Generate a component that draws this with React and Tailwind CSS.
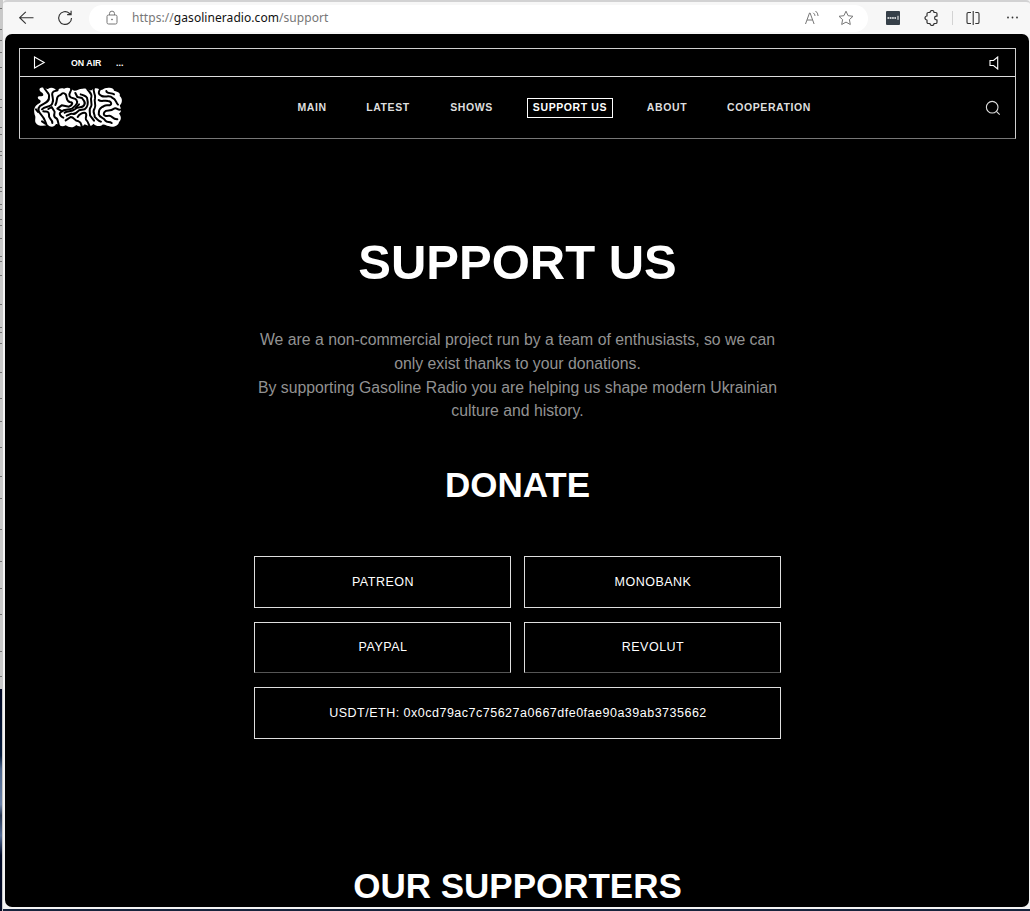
import React from "react";

const navItems = [
  { label: "MAIN", box: "ml-[277px] w-[30px]" },
  { label: "LATEST", box: "ml-[39px] w-[44px]" },
  { label: "SHOWS", box: "ml-[40px] w-[43px]" },
  { label: "SUPPORT US", box: "ml-[34px] h-[20px] w-[86px] border border-white text-white" },
  { label: "ABOUT", box: "ml-[33px] w-[42px]" },
  { label: "COOPERATION", box: "ml-[39px] w-[84px]" },
];

const ticks = [8, 29, 40, 52, 67, 99, 107, 127, 134, 151, 155, 168, 187, 191, 204, 209, 219, 225, 238, 256, 261, 275, 304, 327, 332, 343, 372, 398, 421, 447, 476, 498, 529, 561, 588, 614, 651, 676];

function BrowserBar() {
  return (
    <header className="flex h-[34px] shrink-0 items-center rounded-t border-t-2 border-[#d2d2d3] bg-[#f7f7f7] text-[#333]">
      <svg className="ml-[14px] h-5 w-5 shrink-0" viewBox="0 0 20 20" fill="none" stroke="currentColor" strokeWidth="1.15">
        <path d="M16.5 9.7H3M8.8 3.8 2.7 9.7l6.1 5.9" />
      </svg>
      <svg className="ml-[18px] h-5 w-5 shrink-0" viewBox="0 0 20 20" fill="none" stroke="currentColor" strokeWidth="1.15">
        <path d="M16.5 10a6.4 6.4 0 1 1-2.2-4.8L16 6.5M16.1 2.8v3.8h-4" />
      </svg>
      <div className="ml-[14px] flex h-[27px] w-[779px] shrink-0 items-center rounded-full bg-white">
        <svg className="ml-[16px] h-4 w-[14px] text-[#777]" viewBox="0 0 14 16" fill="none" stroke="currentColor" strokeWidth="1">
          <rect x="2" y="5" width="10" height="9" rx="1.5" />
          <path d="M4.5 5V3.6a2.5 2.5 0 0 1 5 0V5" />
          <circle cx="7" cy="9.5" r=".5" fill="currentColor" />
        </svg>
        <span className="ml-[13px] w-[198px] whitespace-nowrap font-['Noto_Sans',sans-serif] text-[12px] tracking-[0.06px] text-[#777]">
          https://<span className="text-[#111]">gasolineradio.com</span>/support
        </span>
        <svg className="ml-[474px] h-4 w-4 text-[#777]" viewBox="0 0 16 16" fill="none" stroke="currentColor" strokeWidth="1">
          <path d="m1.5 14 4-11h.6l4 11M3 10h5.6M9.2 2.8q1.7 1.1 1.8 3.1M11.5 1q2.5 1.8 2.6 5" />
        </svg>
        <svg className="ml-[18px] h-4 w-4 text-[#777]" viewBox="0 0 16 16" fill="none" stroke="currentColor" strokeWidth="1">
          <path strokeLinejoin="round" d="m8 1.2 2.1 4.5 4.9.6-3.6 3.3.9 4.9L8 12.1l-4.3 2.4.9-4.9L1 6.3l4.9-.6z" />
        </svg>
      </div>
      <svg className="ml-[18px] h-[14px] w-[14px] shrink-0" viewBox="0 0 14 14">
        <rect width="14" height="14" rx="1" fill="#364049" />
        <path d="M1.5 7h8.5" stroke="white" strokeWidth="1.6" strokeDasharray="1.7 .6" />
        <path d="M12 4.8v4" stroke="white" />
      </svg>
      <svg className="ml-[24px] h-4 w-4 shrink-0" viewBox="0 0 16 16" fill="none" stroke="currentColor" strokeWidth="1.2" strokeLinejoin="round">
        <path d="M4 2.5h2a2 2 0 0 1 4 0h1.7q1.3 0 1.3 1.3v2.4h-.6a1.8 1.8 0 0 0 0 3.6h.6v2.4q0 1.3-1.3 1.3H10a2 2 0 0 1-4 0H4.3Q3 13.5 3 12.2V10a2 2 0 0 1 0-4V3.8q0-1.3 1.3-1.3z" />
      </svg>
      <div className="ml-[12px] h-[14px] w-px bg-[#d3d3d3]" />
      <svg className="ml-[12px] h-4 w-4 shrink-0" viewBox="0 0 16 16" fill="none" stroke="currentColor" strokeWidth="1.1">
        <path d="M6 2.5H3.3q-1.3 0-1.3 1.3v8.4q0 1.3 1.3 1.3H6M10.3 2.5h2.4q1.3 0 1.3 1.3v8.4q0 1.3-1.3 1.3h-2.4M8.2 1v14" />
      </svg>
      <svg className="ml-[24px] h-4 w-4 shrink-0" viewBox="0 0 16 16" fill="currentColor">
        <circle cx="3" cy="7.5" r=".9" /><circle cx="7.5" cy="7.5" r=".9" /><circle cx="12" cy="7.5" r=".9" />
      </svg>
    </header>
  );
}

function Logo() {
  return (
    <svg className="ml-[5px] h-[55px] w-[105px] shrink-0" viewBox="0 0 315 165">
      <path
        fill="white"
        d="M48 23C60 20 64 30 70 26C78 20 92 24 95 34C98 26 109 23 117 26C128 21 137 24 144 31C153 36 161 25 174 26C187 23 192 33 200 31C206 23 217 24 223 28C231 34 236 23 246 24C257 22 266 24 267 32C281 35 287 40 284 48C294 56 292 69 284 77C289 86 291 94 282 101C290 110 289 119 282 126C281 138 262 144 251 138C244 139 242 132 232 134C224 142 212 137 205 131C199 142 187 137 179 133C172 143 158 139 154 135C144 145 133 143 122 136C108 145 103 131 93 132C86 144 75 140 68 135C56 139 38 139 32 128C28 119 34 113 29 104C26 91 27 80 38 73C49 68 50 62 41 58C34 49 43 48 49 49C59 48 55 39 48 36C41 29 43 24 48 23Z"
      />
      <g fill="none" stroke="black" strokeWidth="6" strokeLinecap="round" strokeLinejoin="round">
        <path d="M56 17C58 36 75 35 72 51C74 67 57 69 45 78C35 88 43 99 50 106C59 115 58 119 68 142" />
        <path d="M51 88C60 77 78 84 82 70C89 58 79 48 82 39C86 28 100 36 98 27" />
        <path d="M55 94C65 96 70 91 72 103C69 118 82 115 82 129M70 87L80 81L87 92C94 99 81 105 91 113C103 116 95 127 105 143" />
        <path d="M91 75C99 61 92 51 102 47C113 43 110 34 122 43C127 52 122 61 134 66C146 67 143 75 132 80L110 76L97 86L108 92" />
        <path d="M138 22C142 38 129 35 134 49C139 58 151 52 155 61C162 71 148 80 141 86C128 91 119 84 108 96C98 102 111 111 115 113" />
        <path d="M119 98C129 92 140 96 149 88C160 77 174 87 178 74C184 65 173 59 171 54L157 51L151 39" />
        <path d="M125 107L139 101C148 104 153 100 162 91L179 88C186 82 191 72 187 59C188 49 179 47 167 43" />
        <path d="M122 121L137 111C149 111 146 123 161 124C172 128 166 135 173 145" />
        <path d="M158 111C163 102 174 97 181 99C189 105 179 112 183 119C191 127 190 132 195 142" />
        <path d="M185 23C188 35 202 37 199 51C195 61 203 71 198 80C190 88 196 97 195 106L207 122" />
        <path d="M207 23C201 37 214 43 210 55C206 66 215 75 209 85C200 96 211 102 209 111C218 117 218 123 228 125" />
        <path d="M230 21C217 38 220 44 230 48C241 54 253 43 263 54C273 57 272 67 279 74" />
        <path d="M221 60C227 66 239 60 249 63C260 64 263 76 250 76C238 74 238 79 231 81C218 89 223 99 221 103C224 114 237 111 241 122C247 129 253 123 260 129" />
        <path d="M289 88C276 93 276 79 265 87C257 96 244 87 238 97C232 107 244 110 253 107C262 107 263 119 277 118" />
        <path d="M244 33C244 42 260 37 267 43M51 124L61 131M33 88L39 96M153 83L162 73" />
      </g>
    </svg>
  );
}

function Donate({ children, className = "h-[52px]" }) {
  return (
    <button className={"flex items-center justify-center border border-[#dedede] pl-[2px] text-[12.5px] tracking-[0.5px] text-white " + className}>
      {children}
    </button>
  );
}

export default function App() {
  return (
    <div className="flex h-[911px] w-[1030px] overflow-hidden bg-[#e6e6e6] font-['Liberation_Sans',Arial,sans-serif]">
      <svg className="h-[911px] w-[3px] shrink-0" viewBox="0 0 3 911">
        <defs>
          <linearGradient id="edge" x1="0" y1="0" x2="0" y2="1">
            <stop offset="0" stopColor="#020824" /><stop offset=".3" stopColor="#071d3d" />
            <stop offset=".36" stopColor="#4c658b" /><stop offset=".52" stopColor="#6a80a6" />
            <stop offset=".57" stopColor="#273752" /><stop offset=".66" stopColor="#536b95" />
            <stop offset=".75" stopColor="#020b28" /><stop offset="1" stopColor="#050b24" />
          </linearGradient>
        </defs>
        <rect width="3" height="911" fill="#c9c9c9" />
        {ticks.map((y) => <rect key={y} y={y} width="2" height="1" fill="#777" />)}
        <rect y="689" width="2" height="222" fill="url(#edge)" />
      </svg>
      <div className="flex w-[1027px] shrink-0 flex-col bg-[#f4f4f4]">
        <BrowserBar />
        <div className="ml-[2px] mr-px flex h-[873px] flex-col rounded-[7px] bg-black px-[14px] pt-[14px]">
          <div className="flex h-[91px] w-[997px] shrink-0 flex-col border border-[#cfcfcf] border-b-[#777]">
            <div className="flex h-[28px] shrink-0 items-center border-b border-[#ddd] text-white">
              <svg className="ml-[13px] h-[13px] w-[13px]" viewBox="0 0 13 13" fill="none" stroke="currentColor" strokeWidth="1.1">
                <path d="M1.5 1v11l9.7-5.5z" />
              </svg>
              <span className="ml-[25px] w-[31px] whitespace-nowrap pt-[2px] text-[8.8px] font-bold">ON AIR</span>
              <span className="ml-[14px] pt-[2px] text-[9px] font-bold">...</span>
              <svg className="ml-auto mr-[15px] h-[14px] w-[11px]" viewBox="0 0 11 14" fill="none" stroke="currentColor" strokeWidth="1.1">
                <path d="M8.7 1v12L4.5 9.5H1v-5h3.5z" />
              </svg>
            </div>
            <nav className="flex h-[61px] items-center text-[10.5px] font-bold tracking-[0.6px] text-[#dedede]">
              <div className="flex w-0 shrink-0"><Logo /></div>
              {navItems.map((item) => (
                <a key={item.label} className={"flex shrink-0 items-center justify-center whitespace-nowrap " + item.box}>{item.label}</a>
              ))}
              <svg className="ml-auto mr-[14px] h-4 w-4" viewBox="0 0 16 16" fill="none" stroke="currentColor" strokeWidth="1.1">
                <circle cx="7.2" cy="7.2" r="5.8" /><path d="m11.4 11.4 3.3 3.3" />
              </svg>
            </nav>
          </div>
          <main className="flex flex-col items-center text-center text-white">
            <h1 className="mt-[93px] h-[60px] whitespace-nowrap pl-px text-[49px] font-bold leading-[60px]">SUPPORT US</h1>
            <p className="mt-[36px] w-[560px] whitespace-nowrap pl-px text-[15.8px] leading-[23.8px] text-[#929292]">
              We are a non-commercial project run by a team of enthusiasts, so we can<br />
              only exist thanks to your donations.<br />
              By supporting Gasoline Radio you are helping us shape modern Ukrainian<br />
              culture and history.
            </p>
            <h2 className="mt-[42px] h-[40px] pl-px text-[35px] font-bold leading-[40px]">DONATE</h2>
            <div className="mt-[51px] grid w-[527px] grid-cols-2 gap-x-[13px] gap-y-[14px]">
              <Donate>PATREON</Donate>
              <Donate>MONOBANK</Donate>
              <Donate className="h-[51px] border-b-[#555]">PAYPAL</Donate>
              <Donate className="h-[51px] border-b-[#555]">REVOLUT</Donate>
              <Donate className="col-span-2 h-[52px]">USDT/ETH: 0x0cd79ac7c75627a0667dfe0fae90a39ab3735662</Donate>
            </div>
            <h2 className="mt-[127px] h-[40px] whitespace-nowrap pl-px text-[35px] font-bold leading-[40px]">OUR SUPPORTERS</h2>
          </main>
        </div>
        <div className="mt-[2px] h-[2px] bg-[#17243d]" />
      </div>
    </div>
  );
}
